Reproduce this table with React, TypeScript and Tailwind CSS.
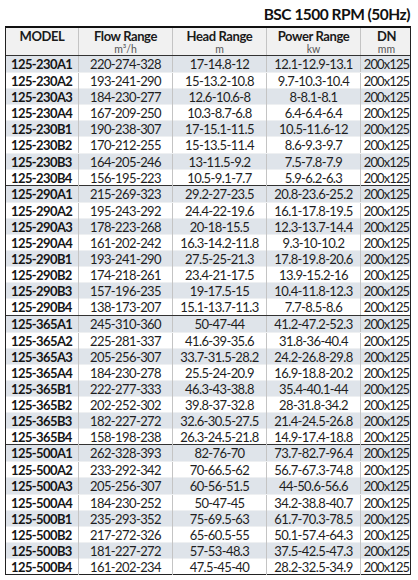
import React from 'react';

type Row = [string, string, string, string];

const GROUPS: { prefix: string; rows: Row[] }[] = [
  {
    prefix: '125-230',
    rows: [
      ['A1', '220-274-328', '17-14.8-12', '12.1-12.9-13.1'],
      ['A2', '193-241-290', '15-13.2-10.8', '9.7-10.3-10.4'],
      ['A3', '184-230-277', '12.6-10.6-8', '8-8.1-8.1'],
      ['A4', '167-209-250', '10.3-8.7-6.8', '6.4-6.4-6.4'],
      ['B1', '190-238-307', '17-15.1-11.5', '10.5-11.6-12'],
      ['B2', '170-212-255', '15-13.5-11.4', '8.6-9.3-9.7'],
      ['B3', '164-205-246', '13-11.5-9.2', '7.5-7.8-7.9'],
      ['B4', '156-195-223', '10.5-9.1-7.7', '5.9-6.2-6.3'],
    ],
  },
  {
    prefix: '125-290',
    rows: [
      ['A1', '215-269-323', '29.2-27-23.5', '20.8-23.6-25.2'],
      ['A2', '195-243-292', '24.4-22-19.6', '16.1-17.8-19.5'],
      ['A3', '178-223-268', '20-18-15.5', '12.3-13.7-14.4'],
      ['A4', '161-202-242', '16.3-14.2-11.8', '9.3-10-10.2'],
      ['B1', '193-241-290', '27.5-25-21.3', '17.8-19.8-20.6'],
      ['B2', '174-218-261', '23.4-21-17.5', '13.9-15.2-16'],
      ['B3', '157-196-235', '19-17.5-15', '10.4-11.8-12.3'],
      ['B4', '138-173-207', '15.1-13.7-11.3', '7.7-8.5-8.6'],
    ],
  },
  {
    prefix: '125-365',
    rows: [
      ['A1', '245-310-360', '50-47-44', '41.2-47.2-52.3'],
      ['A2', '225-281-337', '41.6-39-35.6', '31.8-36-40.4'],
      ['A3', '205-256-307', '33.7-31.5-28.2', '24.2-26.8-29.8'],
      ['A4', '184-230-278', '25.5-24-20.9', '16.9-18.8-20.2'],
      ['B1', '222-277-333', '46.3-43-38.8', '35.4-40.1-44'],
      ['B2', '202-252-302', '39.8-37-32.8', '28-31.8-34.2'],
      ['B3', '182-227-272', '32.6-30.5-27.5', '21.4-24.5-26.8'],
      ['B4', '158-198-238', '26.3-24.5-21.8', '14.9-17.4-18.8'],
    ],
  },
  {
    prefix: '125-500',
    rows: [
      ['A1', '262-328-393', '82-76-70', '73.7-82.7-96.4'],
      ['A2', '233-292-342', '70-66.5-62', '56.7-67.3-74.8'],
      ['A3', '205-256-307', '60-56-51.5', '44-50.6-56.6'],
      ['A4', '184-230-252', '50-47-45', '34.2-38.8-40.7'],
      ['B1', '235-293-352', '75-69.5-63', '61.7-70.3-78.5'],
      ['B2', '217-272-326', '65-60.5-55', '50.1-57.4-64.3'],
      ['B3', '181-227-272', '57-53-48.3', '37.5-42.5-47.3'],
      ['B4', '161-202-234', '47.5-45-40', '28.2-32.5-34.9'],
    ],
  },
];

const COLS = 'grid grid-cols-[73px_94px_94px_94px_51px]';

const HeaderCell = ({ title, unit, last }: { title: string; unit?: string; last?: boolean }) => (
  <div className={`flex flex-col items-center justify-start pt-[2px] ${last ? '' : 'border-r border-[#c4c4c4]'}`}>
    <span className="text-[13px] font-bold leading-[13px] tracking-[-0.4px] text-[#1a1a1a]">{title}</span>
    {unit && <span className="mt-[1px] text-[10.5px] leading-[11px] text-[#555]">{unit}</span>}
  </div>
);

export default function App() {
  return (
    <div className="w-[418px] h-[580px] bg-white pl-[5px] pr-[7px] text-[#1e1e1e]" style={{ fontFamily: 'Lato, "Noto Sans", sans-serif' }}>
      <div className="h-[26px] flex items-end justify-end pb-[4px] pr-[1px]">
        <h1 className="text-[15.5px] font-bold leading-none tracking-[-0.5px] text-[#111]">BSC 1500 RPM (50Hz)</h1>
      </div>

      <div className="border-x border-b border-t-2 border-[#222] border-t-[#111]">
        <div className={`${COLS} h-[28px] bg-[#f1f1f1] border-b-[1.5px] border-[#333]`}>
          <HeaderCell title="MODEL" />
          <HeaderCell title="Flow Range" unit="m³/h" />
          <HeaderCell title="Head Range" unit="m" />
          <HeaderCell title="Power Range" unit="kw" />
          <HeaderCell title="DN" unit="mm" last />
        </div>

        {GROUPS.map((group, gi) => (
          <div key={group.prefix} className={gi > 0 ? 'border-t-[1.5px] border-[#333]' : ''}>
            {group.rows.map((row, ri) => (
              <div
                key={row[0]}
                className={`${COLS} h-[16.1px] text-[13px] leading-[16px] tracking-[-0.6px] ${ri % 2 === 0 ? 'bg-[#dfe4ea]' : 'bg-white'} ${ri > 0 ? 'border-t border-[#eef0f2]' : ''}`}
              >
                <div className="pl-[5px] font-bold border-r border-[#c4c4c4] text-[#151515]">{group.prefix + row[0]}</div>
                <div className="text-center border-r border-[#c4c4c4]">{row[1]}</div>
                <div className="text-center border-r border-[#c4c4c4]">{row[2]}</div>
                <div className="text-center border-r border-[#c4c4c4]">{row[3]}</div>
                <div className="text-center tracking-[-0.9px]">200x125</div>
              </div>
            ))}
          </div>
        ))}
      </div>
    </div>
  );
}
